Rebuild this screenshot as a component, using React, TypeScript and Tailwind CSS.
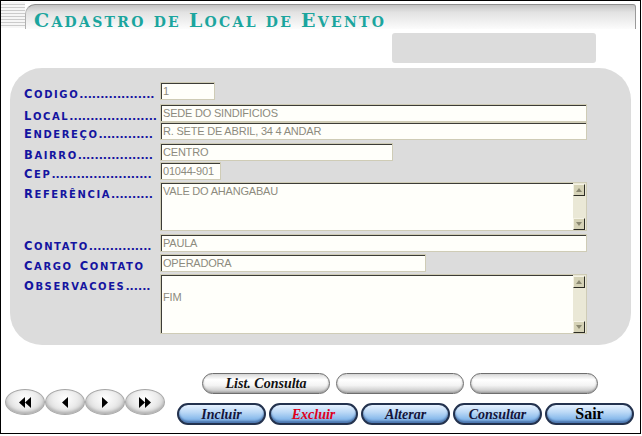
import React from "react";

type Row = {
  label: string;
  dots: number;
  value: string;
  box: string;
  gap: string;
  area?: boolean;
};

const rows: Row[] = [
  { label: "Codigo", dots: 18, value: "1", box: "w-[55px] h-[18px]", gap: "mt-0" },
  { label: "Local", dots: 21, value: "SEDE DO SINDIFICIOS", box: "w-[427px] h-[18px]", gap: "mt-[4px]" },
  { label: "Endereço", dots: 13, value: "R. SETE DE ABRIL, 34 4 ANDAR", box: "w-[427px] h-[18px]", gap: "mt-0" },
  { label: "Bairro", dots: 18, value: "CENTRO", box: "w-[233px] h-[18px]", gap: "mt-[3px]" },
  { label: "Cep", dots: 24, value: "01044-901", box: "w-[61px] h-[18px]", gap: "mt-[1px]" },
  { label: "Referência", dots: 10, value: "VALE DO AHANGABAU", box: "w-[427px] h-[49px]", gap: "mt-[2px]", area: true },
  { label: "Contato", dots: 15, value: "PAULA", box: "w-[427px] h-[18px]", gap: "mt-[3px]" },
  { label: "Cargo Contato", dots: 0, value: "OPERADORA", box: "w-[266px] h-[18px]", gap: "mt-[2px]" },
  { label: "Observacoes", dots: 6, value: "\nFIM", box: "w-[427px] h-[60px]", gap: "mt-[2px]", area: true },
];

// Copperplate-style small caps: big first letter, smaller capitals after it
function Caps({ text, big, small }: { text: string; big: string; small: string }) {
  return (
    <>
      {text.split(" ").map((word, i) => (
        <React.Fragment key={i}>
          {i > 0 && " "}
          {word[0] === word[0].toUpperCase() ? (
            <>
              <span className={big}>{word[0]}</span>
              <span className={small}>{word.slice(1).toUpperCase()}</span>
            </>
          ) : (
            <span className={small}>{word.toUpperCase()}</span>
          )}
        </React.Fragment>
      ))}
    </>
  );
}

function Label({ text, dots }: { text: string; dots: number }) {
  return (
    <div className="w-[136px] h-[18px] shrink-0 flex items-end overflow-hidden">
      <span className="whitespace-nowrap font-['DejaVu_Sans',sans-serif] font-bold leading-[10px] text-[#1414a0]">
        <span className="tracking-[1.6px]">
          <Caps text={text} big="text-[11.5px]" small="text-[10px]" />
        </span>
        <span className="text-[11px]">{".".repeat(dots)}</span>
      </span>
    </div>
  );
}

function ScrollButton({ up }: { up: boolean }) {
  return (
    <div className="w-[12px] h-[12px] flex items-center justify-center bg-[#d5d2b6] border border-t-[#f4f2e4] border-l-[#f4f2e4] border-b-[#2c2c24] border-r-[#2c2c24]">
      <svg width="6" height="4" viewBox="0 0 6 4">
        <polygon points={up ? "0,4 3,0 6,4" : "0,0 3,4 6,0"} fill="#8a8870" />
      </svg>
    </div>
  );
}

function Field({ row }: { row: Row }) {
  return (
    <div className={`flex ${row.gap}`}>
      <Label text={row.label} dots={row.dots} />
      <div
        className={`${row.box} flex border border-[#cfccb6] shadow-[inset_1px_1px_0_#3c3c36] bg-[#fffffa] font-['Liberation_Sans',Arial,sans-serif] text-[11px] leading-[14px] text-[#8d8b7e] tracking-[-0.2px]`}
      >
        <div className="flex-1 pl-[2px] pt-[1px] whitespace-pre overflow-hidden">{row.value}</div>
        {row.area && (
          <div className="w-[13px] flex flex-col justify-between bg-[#eae8d6] pt-[1px]">
            <ScrollButton up />
            <ScrollButton up={false} />
          </div>
        )}
      </div>
    </div>
  );
}

function NavButton({ kind }: { kind: "first" | "prev" | "next" | "last" }) {
  const shapes: Record<string, string[]> = {
    first: ["7,0 1,5.5 7,11", "13,0 7,5.5 13,11"],
    prev: ["10,0 4,5.5 10,11"],
    next: ["4,0 10,5.5 4,11"],
    last: ["1,0 7,5.5 1,11", "7,0 13,5.5 7,11"],
  };
  return (
    <div className="w-[40px] h-[26px] rounded-[50%] border border-[#a8a8a8] bg-[radial-gradient(ellipse_at_50%_35%,#ffffff_0%,#ececec_45%,#c2c2c2_100%)] shadow-[inset_0_-2px_3px_#b0b0b0] flex items-center justify-center">
      <svg width="14" height="11" viewBox="0 0 14 11">
        {shapes[kind].map((p) => (
          <polygon key={p} points={p} fill="#000" />
        ))}
      </svg>
    </div>
  );
}

function GrayPill({ text }: { text?: string }) {
  return (
    <div className="w-[128px] h-[21px] rounded-full border border-[#6e6e6e] bg-[linear-gradient(to_bottom,#d8d8d8_0%,#ffffff_30%,#f4f4f4_60%,#bcbcbc_100%)] shadow-[inset_0_-1px_2px_#9a9a9a] flex items-center justify-center font-['Liberation_Serif',serif] italic font-bold text-[14px] text-[#111]">
      {text}
    </div>
  );
}

function BluePill({ text, color, plain }: { text: string; color: string; plain?: boolean }) {
  return (
    <div
      className={`w-[89px] h-[22px] rounded-full border-2 border-[#23324e] bg-[linear-gradient(to_bottom,#e6f2ff_0%,#bcd9f6_40%,#8cbcec_75%,#6f9fd6_100%)] shadow-[inset_0_-2px_2px_#4d78b0] flex items-center justify-center font-['Liberation_Serif',serif] font-bold ${plain ? "text-[16px]" : "italic text-[14px]"} ${color}`}
    >
      {text}
    </div>
  );
}

export default function App() {
  return (
    <div className="w-[642px] h-[436px] bg-white">
      <div className="w-[641px] h-[434px] border border-black flex flex-col">
        {/* header */}
        <div className="mt-[1px] h-[27px] flex">
          <div className="w-[24px] h-[26px] bg-[repeating-linear-gradient(to_bottom,#f6f6f6_0px,#f6f6f6_2px,#cbcbcb_2px,#cbcbcb_3px)]" />
          <div className="flex-1 mr-[4px] mt-[2px] rounded-tl-[10px] rounded-tr-[3px] border-t border-l border-r border-t-[#8e8e8e] border-l-[#b0b0b0] border-r-[#9a9a9a] bg-[linear-gradient(to_bottom,#c2c2c2_0%,#e2e2e2_30%,#fcfcfc_100%)] pl-[8px] pt-[4px]">
            <span className="whitespace-nowrap font-['DejaVu_Serif',serif] font-bold leading-[19px] tracking-[2.3px] text-[#1ba59e]">
              <Caps text="Cadastro de Local de Evento" big="text-[19px]" small="text-[14px]" />
            </span>
          </div>
        </div>

        {/* status box */}
        <div className="mt-[4px] ml-[391px] w-[204px] h-[30px] rounded-[3px] bg-[#dcdcdc]" />

        {/* form panel */}
        <div className="mt-[5px] ml-[9px] w-[621px] h-[277px] rounded-[32px] bg-[#dcdcdc] pl-[14px] pt-[14px] flex flex-col">
          {rows.map((r) => (
            <Field key={r.label} row={r} />
          ))}
        </div>

        {/* buttons */}
        <div className="flex items-start">
          <div className="ml-[4px] mt-[44px] flex">
            <NavButton kind="first" />
            <NavButton kind="prev" />
            <NavButton kind="next" />
            <NavButton kind="last" />
          </div>
          <div className="ml-[12px] mt-[28px] flex flex-col">
            <div className="pl-[25px] flex gap-[6px]">
              <GrayPill text="List. Consulta" />
              <GrayPill />
              <GrayPill />
            </div>
            <div className="mt-[9px] flex gap-[3px]">
              <BluePill text="Incluir" color="text-[#14143a]" />
              <BluePill text="Excluir" color="text-[#e0001c]" />
              <BluePill text="Alterar" color="text-[#14143a]" />
              <BluePill text="Consultar" color="text-[#14143a]" />
              <BluePill text="Sair" color="text-black" plain />
            </div>
          </div>
        </div>
      </div>
    </div>
  );
}
